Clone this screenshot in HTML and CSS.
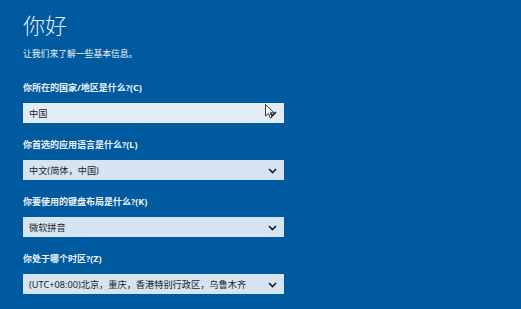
FILE: index.html
```html
<!DOCTYPE html>
<html lang="zh-CN">
<head>
    <meta charset="UTF-8">
    <title>你好</title>
    <link rel="stylesheet" href="styles.css">
</head>
<body>

<div class="page">
    <h1>你好</h1>
    <p class="intro">让我们来了解一些基本信息。</p>

    <div class="field-group">
        <label>你所在的国家/地区是什么?(C)</label>
        <div class="select hover">
            <span>中国</span>
            <svg class="chevron" width="9" height="6" viewBox="0 0 9 6"><path d="M1 1 L4.5 4.5 L8 1" fill="none" stroke="#1b1b1b" stroke-width="1.6"/></svg>
            <!-- 滑鼠游標 -->
            <svg class="cursor" width="11" height="15" viewBox="0 0 11 15"><path d="M0.5 0.5 L0.5 12 L3.3 9.4 L5.3 14 L7 13.2 L5.1 8.8 L9 8.8 Z" fill="#fff" stroke="#222" stroke-width="0.9" stroke-linejoin="round"/></svg>
        </div>
    </div>

    <div class="field-group">
        <label>你首选的应用语言是什么?(L)</label>
        <div class="select">
            <span>中文(简体，中国)</span>
            <svg class="chevron" width="9" height="6" viewBox="0 0 9 6"><path d="M1 1 L4.5 4.5 L8 1" fill="none" stroke="#1b1b1b" stroke-width="1.6"/></svg>
        </div>
    </div>

    <div class="field-group">
        <label>你要使用的键盘布局是什么?(K)</label>
        <div class="select">
            <span>微软拼音</span>
            <svg class="chevron" width="9" height="6" viewBox="0 0 9 6"><path d="M1 1 L4.5 4.5 L8 1" fill="none" stroke="#1b1b1b" stroke-width="1.6"/></svg>
        </div>
    </div>

    <div class="field-group">
        <label>你处于哪个时区?(Z)</label>
        <div class="select">
            <span>(UTC+08:00)北京，重庆，香港特别行政区，乌鲁木齐</span>
            <svg class="chevron" width="9" height="6" viewBox="0 0 9 6"><path d="M1 1 L4.5 4.5 L8 1" fill="none" stroke="#1b1b1b" stroke-width="1.6"/></svg>
        </div>
    </div>
</div>

</body>
</html>
```

FILE: styles.css
```css
/* 設定頁樣式 */
body {
    margin: 0;
    background: #005a9f;
    font-family: "Noto Sans", "Noto Sans CJK SC", sans-serif;
    color: #eef3fa;
}
.page {
    width: 261px;
    padding: 12px 0 0 23px;
    display: flex;
    flex-direction: column;
}
h1 {
    margin: 0;
    font-family: "Noto Sans CJK SC", sans-serif;
    font-weight: 300;
    font-size: 22px;
    line-height: 24px;
    color: #e8f0f8;
}
.intro {
    margin: 12px 0 22px;
    font-size: 8.8px;
    line-height: 12px;
}
.field-group {
    display: flex;
    flex-direction: column;
    margin-bottom: 16px;
}
.field-group label {
    font-size: 9px;
    line-height: 12px;
    font-weight: bold;
    margin-bottom: 9px;
}
.select {
    position: relative;
    height: 20px;
    box-sizing: border-box;
    padding: 0 7px 0 6px;
    display: flex;
    align-items: center;
    justify-content: space-between;
    background: #d6e4f1;
    color: #1e1e1e;
    font-size: 9.2px;
}
.select.hover {
    background: #e1ecf6;
}
.chevron {
    margin-top: 1px;
}
.cursor {
    position: absolute;
    left: 242px;
    top: 1px;
}
```
